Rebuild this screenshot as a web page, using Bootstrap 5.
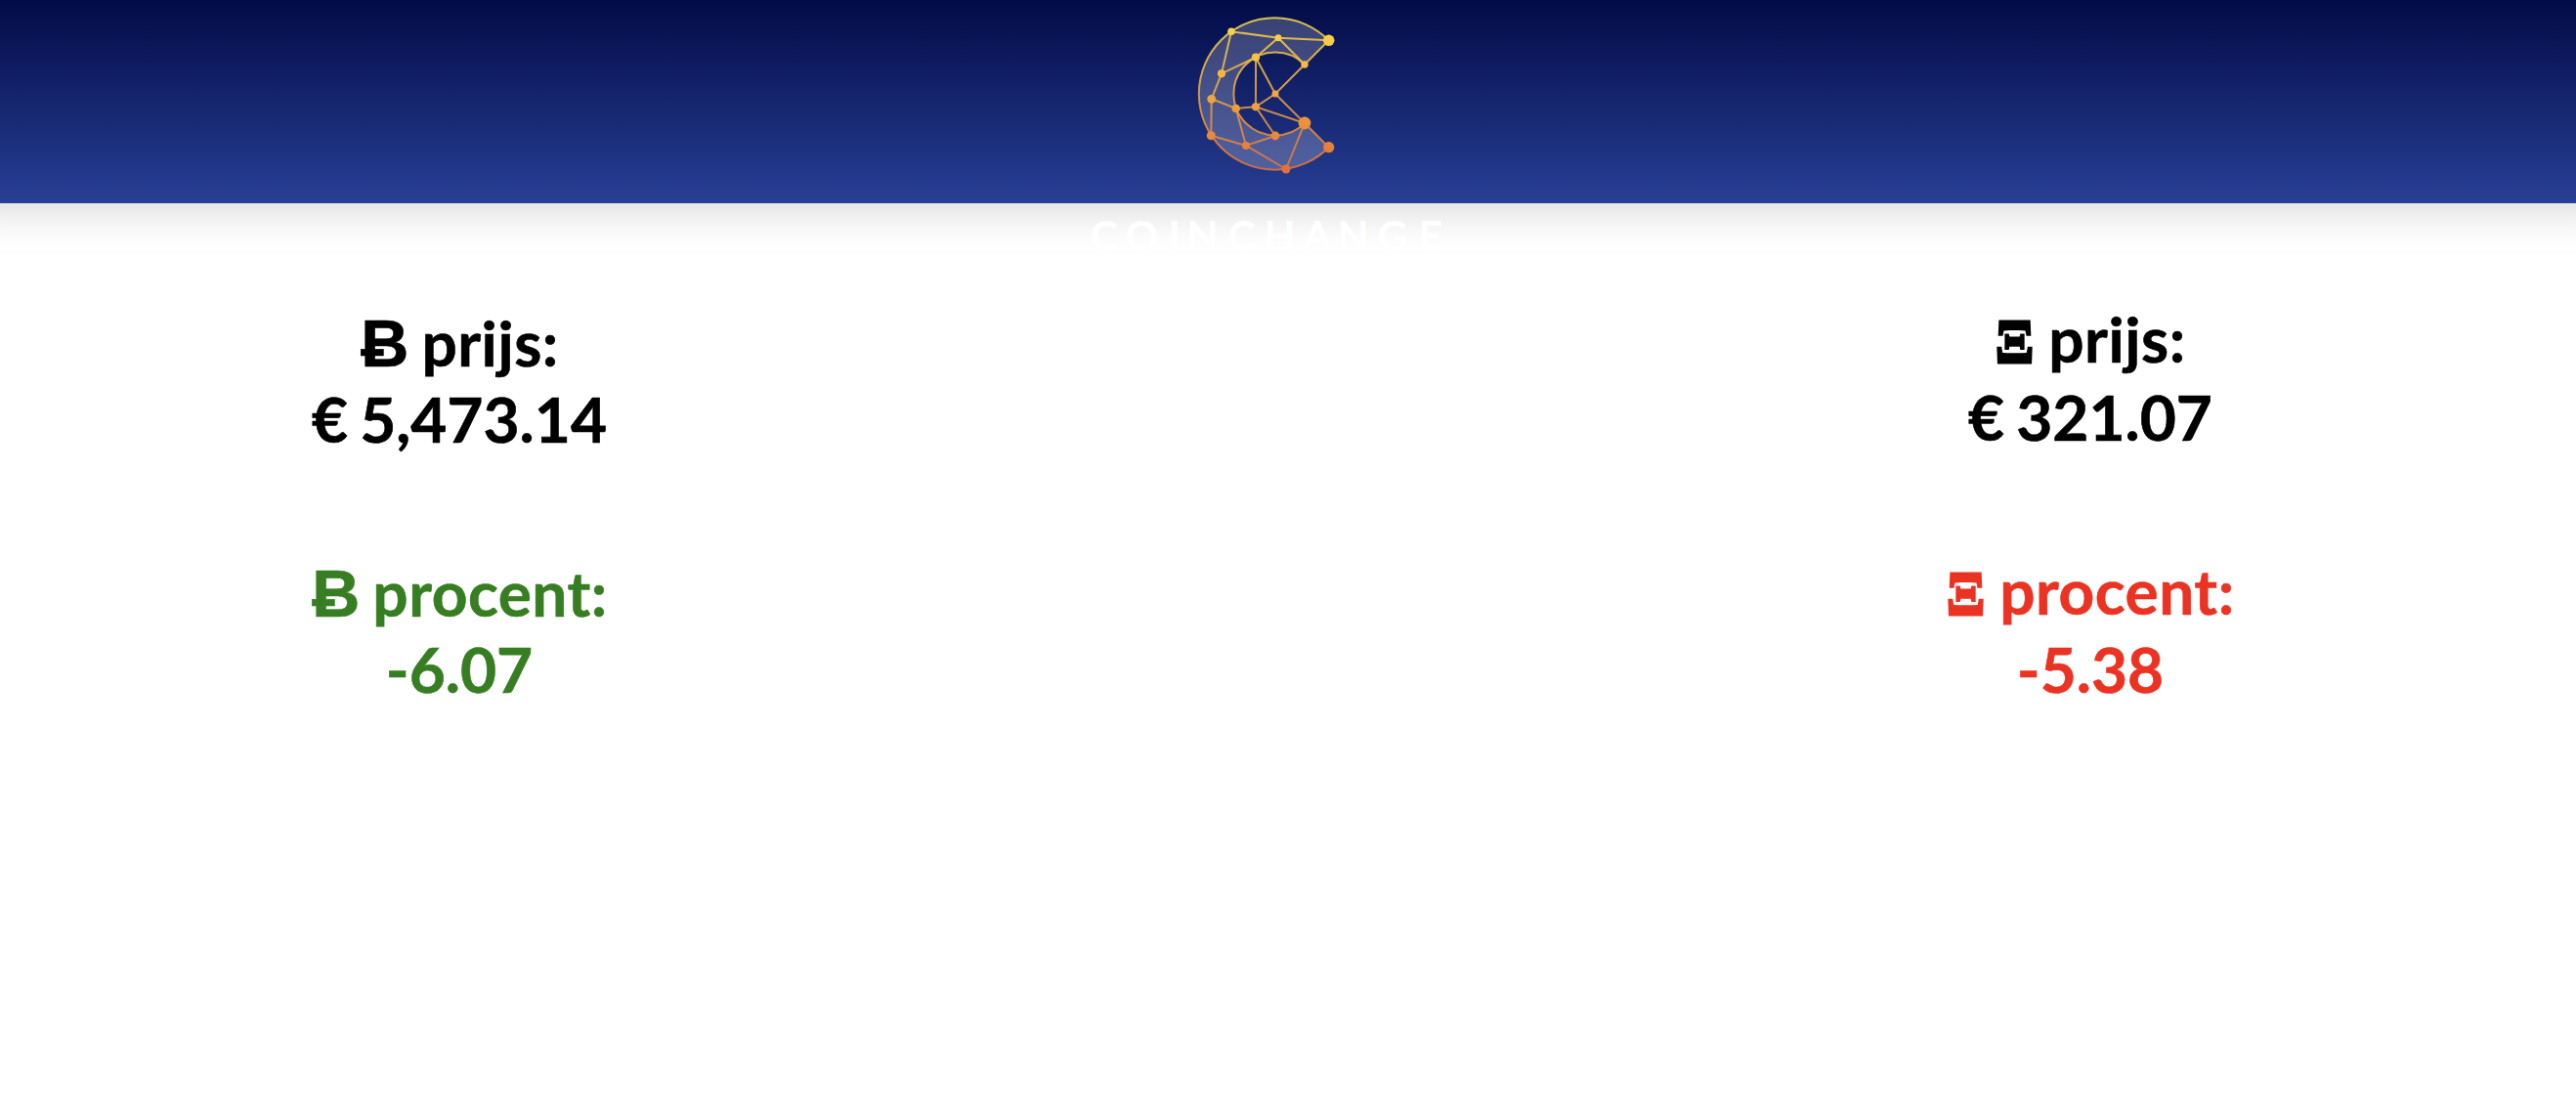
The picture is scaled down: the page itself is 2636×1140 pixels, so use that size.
<!DOCTYPE html>
<html lang="nl">
<head>
<meta charset="utf-8">
<title>Coinchange</title>
<link rel="stylesheet" href="https://cdn.jsdelivr.net/npm/bootstrap@5.3.0/dist/css/bootstrap.min.css">
<style>
body{font-family:Lato,sans-serif;color:#000}
.topbar{height:208px;background:linear-gradient(#020b48,#283f94);box-shadow:0 -50px 50px 50px rgba(0,0,0,.2)}
.brand-logo{width:400px;height:280px;margin-left:-48px;flex:none}
.coin{font-size:64px;font-weight:700;line-height:78px;-webkit-text-stroke:.6px currentColor}
.coin p{margin:0;word-spacing:-3.5px}
.coin-btc{width:940px;padding-top:104px}
.coin-eth{width:994px;padding-top:99px}
.coin-eth p{line-height:80px}
.change-btc{color:#377e22;padding-top:100px}
.change-eth{color:#ea3323;padding-top:98px}
.coin .lbl{letter-spacing:.5px;padding-left:1px}
.coin .sym-b{font-family:"Liberation Sans",sans-serif;font-size:68px;line-height:0}
.coin .sym-x{font-family:"Liberation Serif",serif;line-height:0;-webkit-text-stroke:3px currentColor;display:inline-block;transform:scaleX(.9);transform-origin:left;margin-right:-2.5px}
</style>
<script src="https://cdn.jsdelivr.net/npm/bootstrap@5.3.0/dist/js/bootstrap.bundle.min.js"></script>
</head>
<body class="bg-white overflow-hidden">
<header class="topbar d-flex justify-content-center align-items-start">
<svg class="brand-logo" viewBox="1094 0 400 280">
<defs><linearGradient id="gold" gradientUnits="userSpaceOnUse" x1="0" y1="18" x2="0" y2="174"><stop offset="0" stop-color="#f8dc4b"/><stop offset=".5" stop-color="#efa83f"/><stop offset="1" stop-color="#e46f38"/></linearGradient></defs>
<path d="M1359.7 41.3A77.7 77.7 0 1 0 1359.7 150.7L1335 126A42.5 42.5 0 1 1 1335 66Z" fill="#fff" fill-opacity=".21"/>
<g fill="none" stroke="url(#gold)" stroke-width="2" stroke-opacity=".85">
<path d="M1359.7 41.3A77.7 77.7 0 1 0 1359.7 150.7L1335 126A42.5 42.5 0 1 1 1335 66Z"/>
<path d="M1359.7 41.3L1308 38.7L1260 32.3L1250 75.3L1285 58.7L1308 38.7L1335 66L1305 96L1285 58.7M1285.1 58.7L1285 109.3L1305 96L1335 126L1285 109.3L1305 139L1275 149L1264.7 111L1285 109.3M1250 75.3L1239.7 101.3L1264.7 111M1239.7 101.3L1239.3 138.7L1275 149L1316 173L1335 126"/>
</g>
<g fill="url(#gold)"><circle cx="1260" cy="32.3" r="3.8"/><circle cx="1308" cy="38.7" r="3.5"/><circle cx="1359.7" cy="41.3" r="5.8"/><circle cx="1285" cy="58.7" r="4.1"/><circle cx="1250" cy="75.3" r="4.1"/><circle cx="1335" cy="66" r="3.7"/><circle cx="1239.7" cy="101.3" r="4.4"/><circle cx="1264.7" cy="111" r="4.3"/><circle cx="1285" cy="109.3" r="4.1"/><circle cx="1305" cy="96" r="3.5"/><circle cx="1239.3" cy="138.7" r="4.5"/><circle cx="1275" cy="149" r="4"/><circle cx="1305" cy="139" r="4.4"/><circle cx="1335" cy="126" r="6.4"/><circle cx="1359.7" cy="150.7" r="5.6"/><circle cx="1316" cy="173" r="4.5"/></g>
<text x="1116 1152 1196 1215 1257 1294 1334 1369 1410 1452" y="256" font-family="Lato" font-size="41" fill="#fff" stroke="#fff" stroke-width="1.6">COINCHANGE</text>
</svg>
</header>
<main class="d-flex justify-content-between text-center">
<section class="coin coin-btc"><p class="lbl"><span class="sym-b">Ƀ</span> prijs:</p><p>€ 5,473.14</p>
<div class="change-btc"><p class="lbl"><span class="sym-b">Ƀ</span> procent:</p><p>-6.07</p></div></section>
<section class="coin coin-eth"><p class="lbl"><span class="sym-x">Ξ</span> prijs:</p><p>€ 321.07</p>
<div class="change-eth"><p class="lbl"><span class="sym-x">Ξ</span> procent:</p><p>-5.38</p></div></section>
</main>
</body>
</html>
